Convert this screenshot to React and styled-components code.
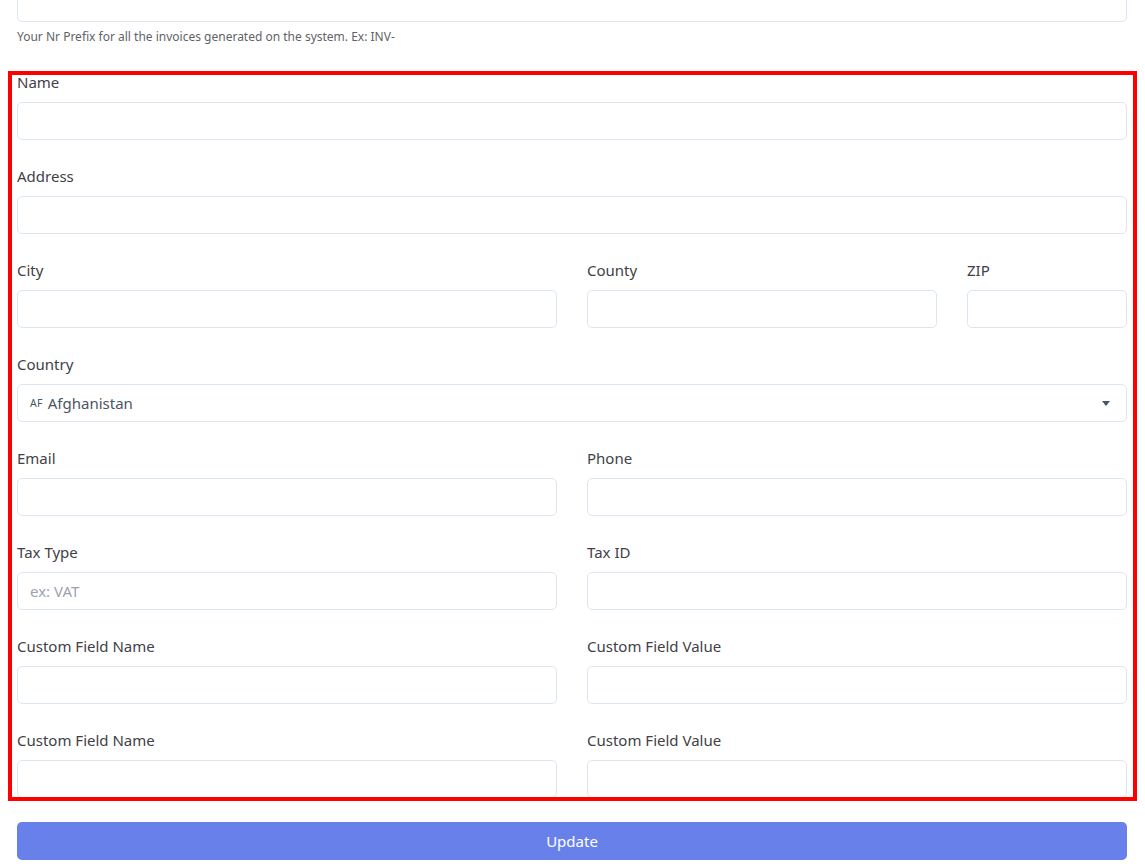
import React from 'react'
import styled, { createGlobalStyle } from 'styled-components'

const GlobalStyle = createGlobalStyle`
  html, body {
    margin: 0;
    padding: 0;
    background: #fff;
    font-family: "Noto Sans", "Open Sans", sans-serif;
    color: #3f3f46;
  }
`

const Page = styled.div`
  padding: 0 18px 0 17px;
  height: 867px;
  overflow: hidden;
`

const TopInput = styled.div`
  height: 38px;
  margin-top: -16px;
  border: 1px solid #dbe6f1;
  border-radius: 5px;
  box-sizing: border-box;
`

const Help = styled.p`
  margin: 7px 0 0;
  font-size: 12px;
  line-height: 16px;
  color: #5f6368;
`

const Highlight = styled.div`
  margin: 26px -10px 0 -9px;
  border: 4px solid #ff0000;
  padding: 0 6px 0 5px;
  height: 722px;
  overflow: hidden;
`

const Grid = styled.div`
  display: grid;
  grid-template-columns: repeat(12, 1fr);
  column-gap: 30px;
`

const Field = styled.div`
  grid-column: span ${p => p.span || 12};
  display: flex;
  flex-direction: column;
  padding-bottom: 29px;
`

const Label = styled.label`
  font-size: 15px;
  line-height: 14px;
  height: 14px;
  margin-bottom: 13px;
  color: #414147;
`

const Input = styled.input`
  height: 38px;
  box-sizing: border-box;
  border: 1px solid #dbe6f1;
  border-radius: 5px;
  padding: 0 12px;
  font-family: inherit;
  font-size: 15px;
  color: #4b5563;
  outline: none;
  &::placeholder {
    color: #9ca3af;
  }
`

const Select = styled.div`
  height: 38px;
  box-sizing: border-box;
  border: 1px solid #dbe6f1;
  border-radius: 5px;
  padding: 0 16px 0 12px;
  display: flex;
  align-items: center;
  font-size: 15px;
  color: #4b5563;
`

const Code = styled.span`
  font-size: 10.5px;
  margin-right: 5px;
  letter-spacing: 0.3px;
`

const Caret = styled.span`
  margin-left: auto;
  width: 0;
  height: 0;
  border-left: 4.5px solid transparent;
  border-right: 4.5px solid transparent;
  border-top: 5px solid #4b5563;
`

const Button = styled.button`
  display: block;
  width: 100%;
  margin-top: 21px;
  height: 38px;
  border: none;
  border-radius: 5px;
  background: #6881ea;
  color: #fff;
  font-family: inherit;
  font-size: 15px;
`

const fieldRows = [
  [{ label: 'Name', span: 12 }],
  [{ label: 'Address', span: 12 }],
  [{ label: 'City', span: 6 }, { label: 'County', span: 4 }, { label: 'ZIP', span: 2 }],
  [{ label: 'Country', span: 12, select: true }],
  [{ label: 'Email', span: 6 }, { label: 'Phone', span: 6 }],
  [{ label: 'Tax Type', span: 6, placeholder: 'ex: VAT' }, { label: 'Tax ID', span: 6 }],
  [{ label: 'Custom Field Name', span: 6 }, { label: 'Custom Field Value', span: 6 }],
  [{ label: 'Custom Field Name', span: 6 }, { label: 'Custom Field Value', span: 6 }],
]

export default function App() {
  return (
    <>
      <GlobalStyle />
      <Page>
        <TopInput />
        <Help>Your Nr Prefix for all the invoices generated on the system. Ex: INV-</Help>
        <Highlight>
          <Grid>
            {fieldRows.flat().map((f, i) => (
              <Field key={i} span={f.span}>
                <Label>{f.label}</Label>
                {f.select ? (
                  <Select>
                    <Code>AF</Code>
                    Afghanistan
                    <Caret />
                  </Select>
                ) : (
                  <Input placeholder={f.placeholder} />
                )}
              </Field>
            ))}
          </Grid>
        </Highlight>
        <Button>Update</Button>
      </Page>
    </>
  )
}
